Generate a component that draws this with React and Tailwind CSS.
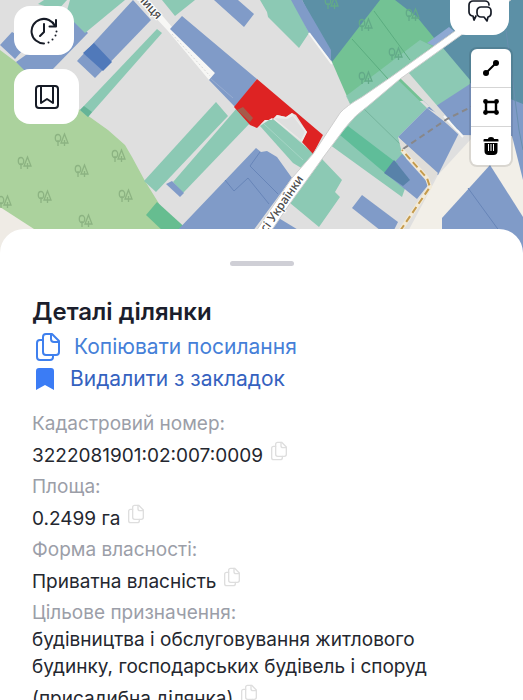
import { useState } from "react";

const FOREST_TREES = [
  [61, 140], [24, 163], [81, 171], [118, 156], [44, 197], [125, 196], [85, 221], [4, 202],
];

const GREEN_TREES = [
  [331, 3], [365, 25], [412, 15], [365, 78], [395, 54],
];

const details = [
  { label: "Кадастровий номер:", value: "3222081901:02:007:0009" },
  { label: "Площа:", value: "0.2499 га" },
  { label: "Форма власності:", value: "Приватна власність" },
  {
    label: "Цільове призначення:",
    value:
      "будівництва і обслуговування житлового будинку, господарських будівель і споруд (присадибна ділянка)",
  },
];

function CopyIcon({ className }) {
  return (
    <svg viewBox="0 0 24 28" fill="none" stroke="currentColor" strokeWidth="2" strokeLinejoin="round" strokeLinecap="round" className={className}>
      <path d="M10 1h6l7 7v11a3 3 0 0 1-3 3h-10a3 3 0 0 1-3-3V4a3 3 0 0 1 3-3z" />
      <path d="M15 1v5a3 3 0 0 0 3 3h5" />
      <path d="M7 7H4a3 3 0 0 0-3 3v14a3 3 0 0 0 3 3h10a3 3 0 0 0 3-3v-2" />
    </svg>
  );
}

function Tree({ x, y, color }) {
  return (
    <g transform={`translate(${x} ${y})`} fill="none" stroke={color} strokeWidth="1.3">
      <ellipse cx="-3" cy="-2" rx="2.7" ry="3.5" />
      <path d="M-3 0v6M3.500 -6L0 3h7zM3.500 0v6" />
    </g>
  );
}

function ParcelMap() {
  return (
    <svg viewBox="0 0 523 253" preserveAspectRatio="xMidYMin slice" className="block h-[253px] w-full bg-[#dfdfdf]" role="img" aria-label="Карта">
      {/* forest and fields */}
      <path fill="#abd29d" d="M0 50L80 110 108 130 125 145 132 157 145 181 158 202 188 254H0z" />
      <path fill="#efebe5" d="M0 207L34 229 60 254H0z" />
      <path fill="#f2efe8" d="M396 254L438 175 472 138 523 120V254z" />
      {FOREST_TREES.map(([x, y]) => (
        <Tree key={`${x}-${y}`} x={x} y={y} color="#8cb382" />
      ))}

      {/* upper left parcels */}
      <g fill="#809bc8">
        <path d="M0 45L12 32 30 42 15 59z" />
        <path d="M16 62L75 20 88 33 52 70H24z" />
        <path d="M133 0L151 20 95 78 77 61z" />
        <path d="M214 0H238L254 14 244 27z" />
      </g>
      <path fill="#5079ba" d="M94 43L112 62 103 71 83 53z" />
      <g fill="#8cc9b4">
        <path d="M38 4L44 0H67L58 10z" />
        <path d="M70 0H125L85 33 66 14z" />
        <path d="M157 29L162 33 88 117 80 110z" />
        <path d="M162 0H195L175 16z" />
        <path d="M260 0L267 12 268 17 299 48 309 33 293 0z" />
      </g>
      <path fill="#65b497" d="M80 110L88 117 92 112 84 106z" />

      {/* side street */}
      <path fill="#f7f7f5" d="M139 0H149L172 27 215 73 209 80 168 31z" />
      <path fill="none" stroke="#d8d8d8" strokeDasharray="2 2" d="M172 34L210 76" />
      <path fill="#809bc8" d="M182 16L257 79 235 107 209 80 215 73 170 29z" />
      <path fill="none" stroke="#97acd0" d="M211 79L233 98" />

      {/* upper right blocks */}
      <path fill="#5c90a6" d="M302 0H523V110L456 130 400 80 332 62z" />
      <path fill="#809bc8" d="M291 0H302L331 50V61L309 33z" />
      <path fill="none" stroke="#f7f7f5" strokeWidth="2" d="M309 33L332 64" />
      <path fill="#73c294" d="M380 0H395L417 17 470 82 430 100 352 108 332 62z" />
      <path fill="#8cc9b4" opacity="0.800" d="M346 96L420 40 432 46 400 74 352 108z" />
      <path fill="none" stroke="#5bad80" d="M374 11L410 60M352 39L388 79" />
      <path fill="#8ea9d3" d="M427 43L449 27 454 31 434 46z" />
      {GREEN_TREES.map(([x, y]) => (
        <Tree key={`${x}-${y}`} x={x} y={y} color="#62aa88" />
      ))}
      <path fill="#809bc8" d="M427 108L470 83 523 104V180L512 136 463 135 447 118z" />
      <path fill="none" stroke="#688fae" d="M506 30L519 130 523 150" />
      <path fill="#8cc9b4" d="M408 72L443 48 470 80 470 84 433 108z" />
      <path fill="#8cc9b4" d="M397 79L427 108 398 137 405 150 408 180 402 197 326 142 345 124z" />
      <path fill="none" stroke="#75b49d" d="M362 107L402 146" />
      <path fill="#809bc8" d="M427 108L459 133 438 175 398 137z" />
      <path fill="#809bc8" d="M402 154L429 184 417 199 385 173z" />
      <path fill="#5fbd99" d="M348 126L398 164 385 173 340 135z" />
      <path fill="#5882a9" d="M394 160L410 180 403 186 384 173z" />
      <path fill="#dddddb" d="M400 78L408 72 447 117 460 136 444 121z" />
      <path fill="none" stroke="#f7f7f5" strokeWidth="2" d="M444 116L463 137" />
      <path fill="#dfddd9" d="M398 137L438 173 430 184 402 153z" />

      {/* lower parcels */}
      <g fill="#8cc9b4">
        <path d="M216 102L228 116 156 192 144 181z" />
        <path d="M237 108L252 121 183 193 173 182z" />
        <path d="M260 126L272 118 313 153 303 169 293 163z" />
        <path d="M322 159L342 180 335 192 340 197 319 227 290 203z" />
        <path fill="#66bd90" d="M157 202L190 232H164L146 215z" />
      </g>
      <path fill="none" stroke="#a5d5c5" d="M264 124L303 160" />
      <g fill="#809bc8">
        <path d="M172 181L184 193 180 197 166 184z" />
        <path d="M256 148L261 152 267 151 277 157 292 178 250 235H173z" />
        <path d="M277 217L300 231V254H250z" />
        <path d="M362 195L398 222 390 238 352 208z" />
        <path d="M490 165L523 217V254H442V218z" />
      </g>
      <path fill="none" stroke="#6785b8" d="M260 152L250 166 278 194M225 180L234 191 248 178 269 204M468 188L500 232" />

      {/* selected parcel */}
      <path fill="#de2323" d="M257 79L323 135 313 154 302 142 307 132 296 115 292 113 286 117 277 115 272 120 265 120 257 128 250 125 234 107z" />
      <path fill="#a55b4a" d="M243 107L253 118 250 122 237 110z" />
      <path fill="#ececea" d="M265 120L272 120 277 115 286 117 292 113 307 132 302 142 272 118 260 125z" />
      <path fill="#dfdfdf" d="M274 118L287 119 293 116 305 132 301 140z" />

      {/* main road */}
      <path
        fill="#fff"
        stroke="#cfcfcf"
        d="M250 240L292 178 313 154 340 113Q346 106 362 97L391 77 455 31 500 -3H515L457 38 400 79 368 106Q355 115 345 128L322 159 291 202 265 240z"
      />

      {/* paths */}
      <path fill="none" stroke="#888789" strokeWidth="2" strokeDasharray="6 4" d="M403 149L447 119 475 105" />
      <path fill="none" stroke="#f3ead6" strokeWidth="4" d="M400 231L430 187 427 178 402 150" />
      <path fill="none" stroke="#c59b4d" strokeWidth="2" strokeDasharray="7 4" d="M400 231L430 187 427 178 402 150" />

      <g fill="#4a4a4a" stroke="#fff" strokeWidth="2" paintOrder="stroke" fontSize="12" fontFamily="Noto Sans, sans-serif" fontWeight="500">
        <text transform="translate(157 20) rotate(47)" textAnchor="end">лиця</text>
        <text transform="translate(304 179) rotate(-55)" textAnchor="end">Лесі Українки</text>
      </g>
    </svg>
  );
}

export default function App() {
  const [tool, setTool] = useState(null);

  return (
    <div className="flex h-screen flex-col overflow-hidden bg-white font-['Inter',sans-serif]">
      <div className="relative shrink-0">
        <ParcelMap />

        <div className="absolute left-3.5 top-1.5 flex flex-col items-start gap-3.5">
          <button type="button" aria-label="Історія" className="flex h-[49px] w-[60px] items-center justify-center rounded-2xl bg-white text-[#161b26]">
            <svg viewBox="0 0 28 28" fill="none" stroke="currentColor" strokeWidth="2" strokeLinecap="round" strokeLinejoin="round" className="size-7">
              <path d="M14 26.500A12.300 12.300 0 1 1 25 9" />
              <path d="M26 3v6.500h-6.500" />
              <path d="M14 7v8l-4 4" />
              <path d="M18.500 25.500v0M22.500 22.500v0M25.500 18.500v0M26.500 14.500v0" />
            </svg>
          </button>
          <button type="button" aria-label="Закладки" className="flex h-[55px] w-[65px] items-center justify-center rounded-2xl bg-white text-[#161b26]">
            <svg viewBox="0 0 24 24" fill="none" stroke="currentColor" strokeWidth="2" strokeLinejoin="round" className="size-6">
              <rect x="1" y="1" width="22" height="22" rx="3" />
              <path d="M6 1v17l6-4 6 4V1" />
            </svg>
          </button>
        </div>

        <button type="button" aria-label="Чат" className="absolute right-3.5 top-0 flex h-[35px] w-[59px] justify-center rounded-b-2xl bg-white text-[#161b26]">
          <svg viewBox="0 0 24 22" fill="none" stroke="currentColor" strokeWidth="1.7" strokeLinejoin="round" strokeLinecap="round" className="h-[22px] w-6">
            <path d="M8 16l-2 4-1-4a4 4 0 0 1-4-4V5a4 4 0 0 1 4-4h12a4 4 0 0 1 4 4" />
            <path d="M13 7h6a4 4 0 0 1 4 4v2a4 4 0 0 1-3 4l-1 4-3-4h-3a4 4 0 0 1-4-4v-2a4 4 0 0 1 4-4z" />
          </svg>
        </button>

        <div className="absolute right-3 top-[49px] flex flex-col divide-y divide-[#d5d5d5] rounded-md bg-white text-black shadow-[0_0_0_2px_rgba(0,0,0,0.1)]">
          <button type="button" aria-label="Лінія" aria-pressed={tool === "line"} onClick={() => setTool("line")} className="flex h-[39px] w-10 items-center justify-center">
            <svg viewBox="0 0 16 16" fill="currentColor" className="size-4">
              <circle cx="3" cy="13" r="3" />
              <circle cx="13" cy="3" r="3" />
              <path d="M3 13L13 3" stroke="currentColor" strokeWidth="2" />
            </svg>
          </button>
          <button type="button" aria-label="Полігон" aria-pressed={tool === "polygon"} onClick={() => setTool("polygon")} className="flex h-[39px] w-10 items-center justify-center">
            <svg viewBox="0 0 16 16" fill="currentColor" className="size-4">
              <path d="M3 3h10v10H3z" fill="none" stroke="currentColor" strokeWidth="2.4" />
              <circle cx="2.500" cy="2.500" r="2.400" />
              <circle cx="13.500" cy="2.500" r="2.400" />
              <circle cx="2.500" cy="13.500" r="2.400" />
              <circle cx="13.500" cy="13.500" r="2.400" />
            </svg>
          </button>
          <button type="button" aria-label="Видалити" className="flex h-[38px] w-10 items-center justify-center">
            <svg viewBox="0 0 16 18" fill="currentColor" className="h-[18px] w-4">
              <path d="M1.500 2H5a3 2 0 0 1 6 0h3.500a1 1 0 0 1 1 1v1.500H.5V3a1 1 0 0 1 1-1z" />
              <path d="M1.500 6h13v8a4 4 0 0 1-4 4h-5a4 4 0 0 1-4-4z" />
              <path d="M5.500 7v7M8 7v7M10.500 7v7" stroke="#fff" strokeWidth="1" />
            </svg>
          </button>
        </div>
      </div>

      <main className="relative -mt-6 grow rounded-t-3xl bg-white px-8">
        <div className="mx-auto mt-8 h-[5px] w-16 rounded-full bg-[#cfcfd6]" />

        <h1 className="mt-[29px] text-[24px] font-semibold leading-[34px] text-[#1b1e2c]">Деталі ділянки</h1>
        <div className="flex flex-col items-start">
          <button type="button" className="flex h-9 items-center text-[21px] leading-8 text-[#4580d8]">
            <CopyIcon className="ml-1 mr-3.5 h-7 w-6 text-[#3f80ee]" />
            Копіювати посилання
          </button>
          <button type="button" className="flex h-7 items-center text-[21px] leading-7 text-[#3562c0]">
            <svg viewBox="0 0 18 22" fill="#3b7cf5" className="ml-1 mr-4 h-[22px] w-[18px]">
              <path d="M3 0h12a3 3 0 0 1 3 3v19l-9-5-9 5V3a3 3 0 0 1 3-3z" />
            </svg>
            Видалити з закладок
          </button>
        </div>

        <dl className="mt-[17px] text-[19px] leading-[27px]">
          {details.map((item) => (
            <div key={item.label}>
              <dt className="text-[#9b9ea8]">{item.label}</dt>
              <dd className="text-[#24272f]">
                {item.value}
                <button type="button" aria-label="Копіювати" className="ml-2 inline-flex h-9 items-center pb-2 align-[1px] text-[#dedede]">
                  <CopyIcon className="h-5 w-4" />
                </button>
              </dd>
            </div>
          ))}
        </dl>
      </main>
    </div>
  );
}
